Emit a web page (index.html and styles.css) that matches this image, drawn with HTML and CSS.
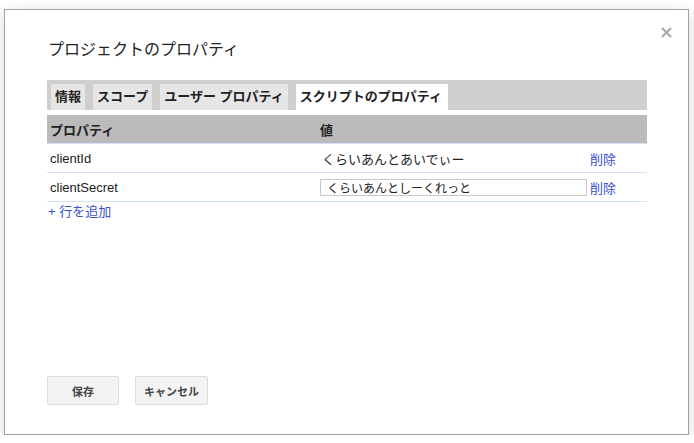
FILE: index.html
```html
<!DOCTYPE html>
<html lang="ja">
<head>
    <meta charset="UTF-8">
    <meta name="viewport" content="width=device-width, initial-scale=1.0">
    <title>プロジェクトのプロパティ</title>
    <link rel="stylesheet" href="styles.css">
</head>
<body>
    <div class="dialog">
        <span class="close">
            <svg width="11" height="11" viewBox="0 0 11 11">
                <path d="M1 1L10 10M10 1L1 10" stroke="#a8a8a8" stroke-width="2.2" fill="none"/>
            </svg>
        </span>
        <div class="dialog-title">プロジェクトのプロパティ</div>

        <div class="tabs">
            <span class="tab">情報</span>
            <span class="tab">スコープ</span>
            <span class="tab">ユーザー プロパティ</span>
            <span class="tab active">スクリプトのプロパティ</span>
        </div>

        <table class="props">
            <thead>
                <tr>
                    <th class="col-name">プロパティ</th>
                    <th class="col-value">値</th>
                    <th class="col-action"></th>
                </tr>
            </thead>
            <tbody>
                <tr>
                    <td>clientId</td>
                    <td class="value-text">くらいあんとあいでぃー</td>
                    <td><a class="link" href="#">削除</a></td>
                </tr>
                <tr>
                    <td>clientSecret</td>
                    <td><input class="value-input" type="text" value="くらいあんとしーくれっと"></td>
                    <td><a class="link" href="#">削除</a></td>
                </tr>
            </tbody>
        </table>
        <a class="link add-row" href="#">+ 行を追加</a>

        <div class="buttons">
            <button class="btn">保存</button>
            <button class="btn">キャンセル</button>
        </div>
    </div>
</body>
</html>
```

FILE: styles.css
```css
body {
    margin: 0;
    padding: 9px 0 0 4px;
    background: #fff;
    font-family: "Liberation Sans", "Noto Sans CJK JP", sans-serif;
    color: #222;
}

.dialog {
    width: 685px;
    height: 426px;
    box-sizing: border-box;
    position: relative;
    display: flex;
    flex-direction: column;
    padding: 28px 41px 29px 42px;
    background: #fff;
    border: 1px solid #a3a3a3;
    box-shadow: 0 4px 14px rgba(0, 0, 0, 0.16);
}

.close {
    position: absolute;
    top: 17px;
    right: 16px;
    width: 11px;
    height: 11px;
    display: flex;
}

.dialog-title {
    font-size: 16px;
    line-height: 24px;
    margin: 0 0 18px 1px;
    color: #222;
}

.tabs {
    display: flex;
    gap: 8px;
    height: 30px;
    box-sizing: border-box;
    padding: 4px 0 0 4px;
    background: #cfcfcf;
}

.tab {
    padding: 0 4px;
    height: 26px;
    line-height: 26px;
    font-size: 13px;
    font-weight: 700;
    color: #222;
    background: #e6e6e6;
    white-space: nowrap;
}

.tab.active {
    background: #fff;
    padding-right: 6px;
}

.props {
    margin-top: 5px;
    width: 600px;
    table-layout: fixed;
    border-collapse: collapse;
    font-size: 13px;
}

.props th {
    height: 28px;
    padding: 0 3px;
    text-align: left;
    font-weight: 700;
    background: #bbbbbb;
    border-bottom: 1px solid #d3e2f4;
}

.props td {
    height: 28px;
    padding: 0 3px;
    border-bottom: 1px solid #d3e2f4;
    vertical-align: middle;
}

.col-name {
    width: 264px;
}

.col-value {
    width: 264px;
}

.col-action {
    width: 54px;
}

.props .value-text {
    padding-left: 5px;
}

.value-input {
    display: block;
    width: 267px;
    height: 17px;
    box-sizing: border-box;
    margin: 0;
    padding: 0 6px;
    border: 1px solid #c8c8c8;
    font-family: inherit;
    font-size: 12px;
    color: #222;
}

.link {
    color: #3a4fd0;
    text-decoration: none;
}

.add-row {
    font-size: 13px;
    margin: 1px 0 0 1px;
    line-height: 18px;
}

.buttons {
    margin-top: auto;
    display: flex;
    gap: 16px;
}

.btn {
    min-width: 72px;
    height: 29px;
    box-sizing: border-box;
    padding: 0 8px;
    background: #f3f3f3;
    border: 1px solid #dcdcdc;
    border-radius: 2px;
    font-family: "Liberation Sans", "Noto Sans CJK JP", sans-serif;
    font-size: 11px;
    font-weight: 700;
    color: #444;
}
```
